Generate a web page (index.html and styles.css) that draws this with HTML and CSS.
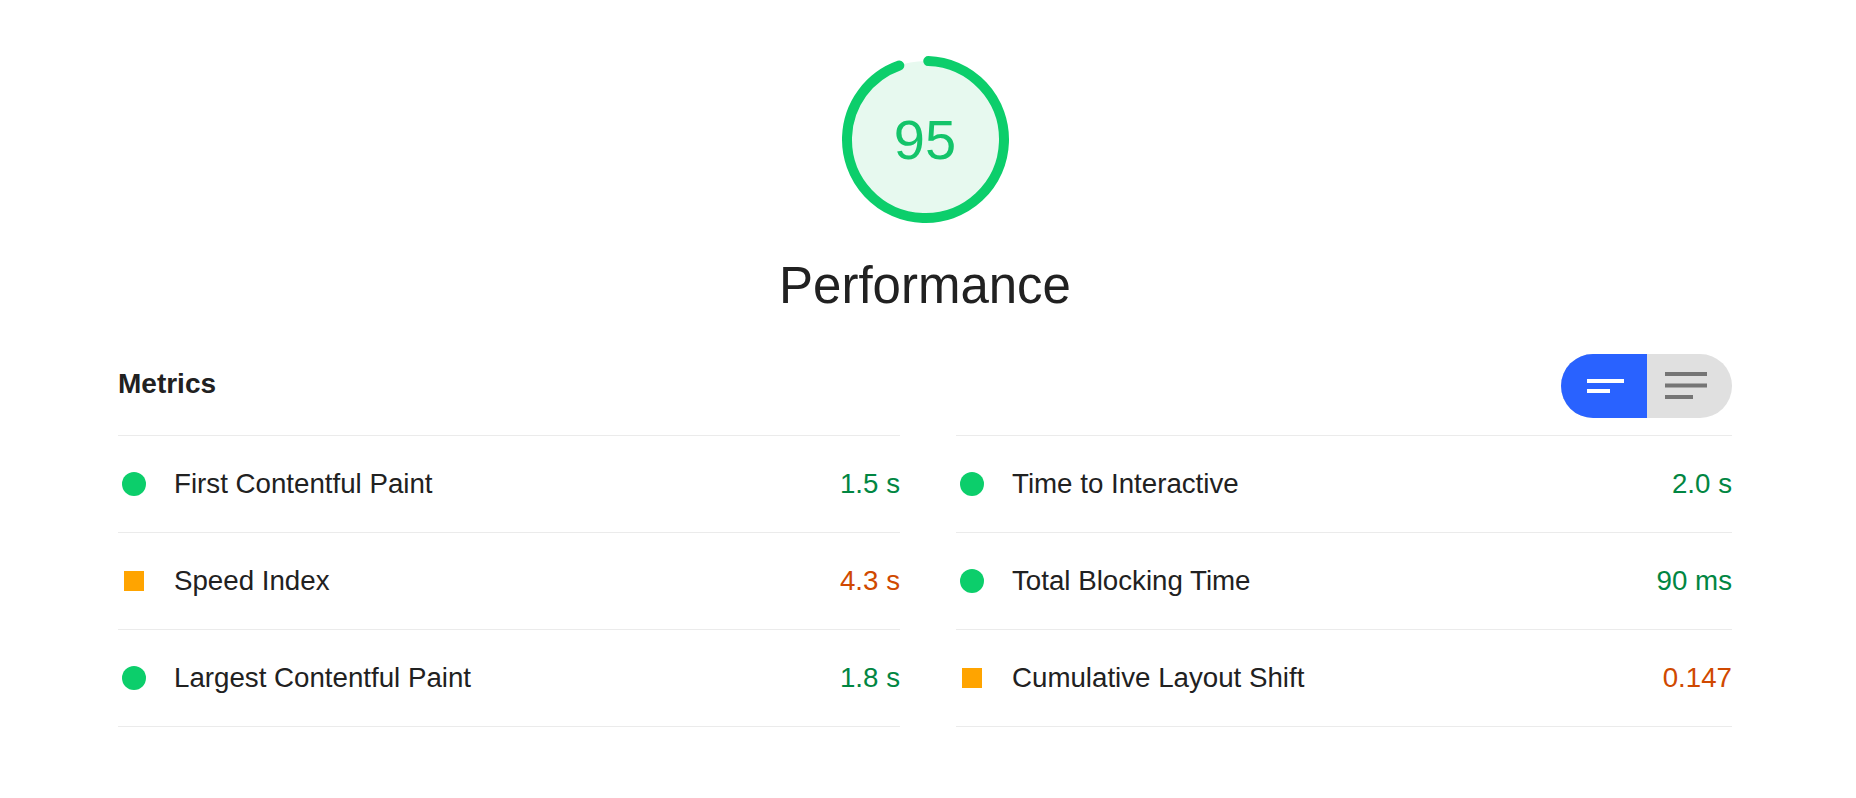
FILE: index.html
```html
<!DOCTYPE html>
<html lang="en">
<head>
<meta charset="utf-8">
<title>Performance</title>
<link rel="stylesheet" href="styles.css">
</head>
<body>
<div class="report">
  <div class="category-header">
    <div class="gauge">
      <svg class="gauge-svg" viewBox="0 0 167 167" width="167" height="167">
        <circle class="gauge-base" cx="83.5" cy="83.5" r="78.5"></circle>
        <circle class="gauge-arc" cx="83.5" cy="83.5" r="78.5" transform="rotate(-88 83.5 83.5)"></circle>
      </svg>
      <div class="gauge-score">95</div>
    </div>
    <div class="category-title">Performance</div>
  </div>

  <div class="metrics-header">
    <div class="metrics-title">Metrics</div>
    <div class="toggle">
      <div class="toggle-opt toggle-opt--active">
        <svg width="40" height="14" viewBox="0 0 40 14"><rect x="0" y="0" width="37" height="4" fill="#fff"/><rect x="0" y="10" width="23" height="4" fill="#fff"/></svg>
      </div>
      <div class="toggle-opt">
        <svg width="42" height="28" viewBox="0 0 42 28"><rect x="0" y="0" width="42" height="4" fill="#757575"/><rect x="0" y="11.5" width="42" height="4" fill="#757575"/><rect x="0" y="23" width="28" height="4" fill="#757575"/></svg>
      </div>
    </div>
  </div>

  <div class="metrics-grid">
    <div class="metric-col">
      <div class="metric"><span class="icon"><span class="dot pass"></span></span><span class="label">First Contentful Paint</span><span class="value v-pass">1.5 s</span></div>
      <div class="metric"><span class="icon"><span class="square avg"></span></span><span class="label">Speed Index</span><span class="value v-avg">4.3 s</span></div>
      <div class="metric"><span class="icon"><span class="dot pass"></span></span><span class="label">Largest Contentful Paint</span><span class="value v-pass">1.8 s</span></div>
    </div>
    <div class="metric-col">
      <div class="metric"><span class="icon"><span class="dot pass"></span></span><span class="label">Time to Interactive</span><span class="value v-pass">2.0 s</span></div>
      <div class="metric"><span class="icon"><span class="dot pass"></span></span><span class="label">Total Blocking Time</span><span class="value v-pass">90 ms</span></div>
      <div class="metric"><span class="icon"><span class="square avg"></span></span><span class="label">Cumulative Layout Shift</span><span class="value v-avg">0.147</span></div>
    </div>
  </div>
</div>
</body>
</html>
```

FILE: styles.css
```css
html, body {
  margin: 0;
  padding: 0;
  background: #ffffff;
}

body {
  font-family: "Liberation Sans", Arial, Helvetica, sans-serif;
  color: #212121;
}

.report {
  width: 1614px;
  margin-left: 118px;
  padding-top: 56px;
}

.category-header {
  display: flex;
  flex-direction: column;
  align-items: center;
}

.gauge {
  display: grid;
  width: 167px;
  height: 167px;
  place-items: center;
}

.gauge > * {
  grid-area: 1 / 1;
}

.gauge-svg {
  display: block;
}

.gauge-base {
  fill: #e7f9ef;
  stroke: none;
}

.gauge-arc {
  fill: none;
  stroke: #0cce6b;
  stroke-width: 10;
  stroke-linecap: round;
  stroke-dasharray: 463 600;
}

.gauge-score {
  font-size: 56px;
  line-height: 56px;
  color: #14c46a;
}

.category-title {
  margin-top: 38px;
  font-size: 51px;
  line-height: 50px;
  color: #212121;
}

.metrics-header {
  margin-top: 43px;
  height: 64px;
  display: flex;
  align-items: center;
  justify-content: space-between;
}

.metrics-title {
  font-size: 28px;
  font-weight: bold;
  color: #212121;
  margin-top: -4px;
}

.toggle {
  display: flex;
  width: 171px;
  height: 64px;
  border-radius: 32px;
  overflow: hidden;
  background: #e0e0e0;
}

.toggle-opt {
  flex: 1;
  display: flex;
  align-items: center;
  justify-content: center;
}

.toggle-opt svg {
  display: block;
}

.toggle-opt--active {
  flex: 0 0 86px;
  background: #2962ff;
  padding-left: 6px;
  box-sizing: border-box;
}

.toggle-opt:not(.toggle-opt--active) {
  padding-right: 8px;
}

.metrics-grid {
  margin-top: 17px;
  display: grid;
  grid-template-columns: 782px 776px;
  column-gap: 56px;
}

.metric {
  display: flex;
  align-items: center;
  height: 96px;
  border-top: 1px solid #ebebeb;
  font-size: 27.7px;
}

.metric:last-child {
  border-bottom: 1px solid #ebebeb;
}

.icon {
  width: 24px;
  height: 24px;
  margin-left: 4px;
  margin-right: 28px;
  display: flex;
  align-items: center;
  justify-content: center;
  flex: 0 0 24px;
}

.dot {
  width: 24px;
  height: 24px;
  border-radius: 50%;
}

.square {
  width: 20px;
  height: 20px;
}

.pass {
  background: #0cce6b;
}

.avg {
  background: #ffa400;
}

.label {
  flex: 1;
  color: #212121;
}

.value {
  text-align: right;
}

.v-pass {
  color: #018642;
}

.v-avg {
  color: #d04900;
}
```
